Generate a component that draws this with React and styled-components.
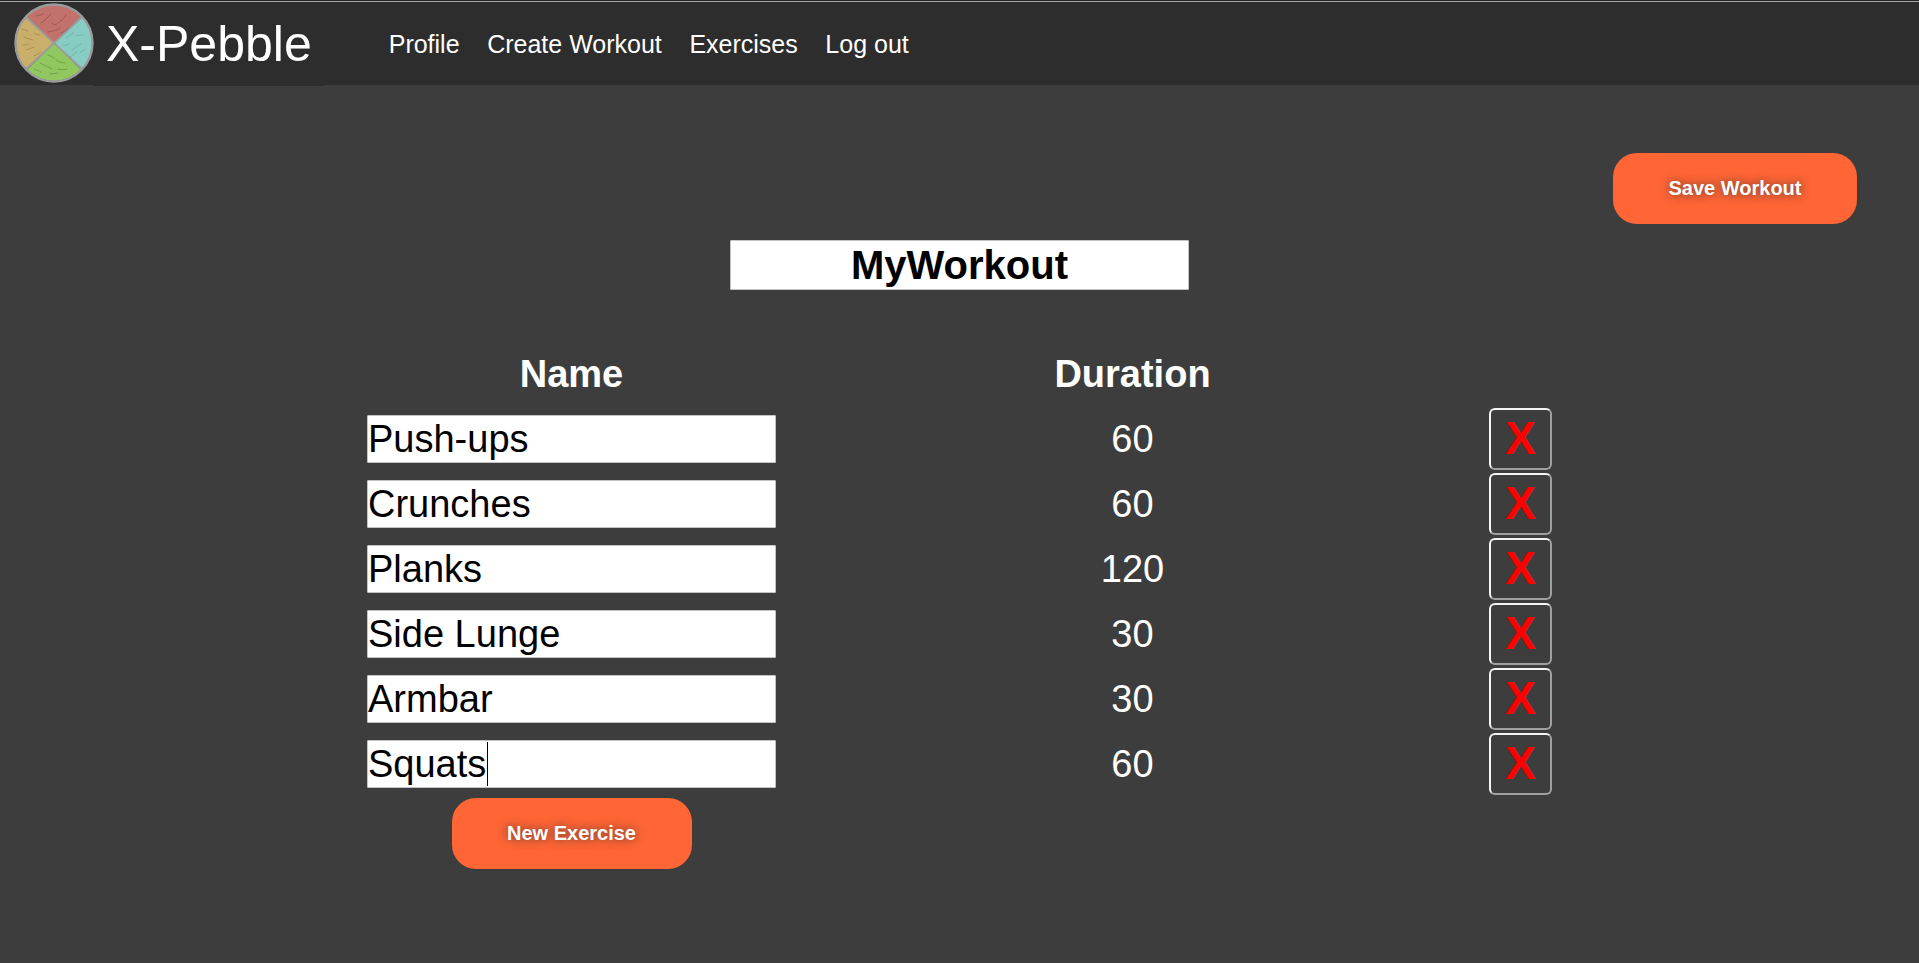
import React from 'react';
import styled, { createGlobalStyle } from 'styled-components';

const exercises = [
  { name: 'Push-ups', duration: 60 },
  { name: 'Crunches', duration: 60 },
  { name: 'Planks', duration: 120 },
  { name: 'Side Lunge', duration: 30 },
  { name: 'Armbar', duration: 30 },
  { name: 'Squats', duration: 60, focused: true },
];

const links = ['Profile', 'Create Workout', 'Exercises', 'Log out'];

const GlobalStyle = createGlobalStyle`
  html, body {
    margin: 0;
    padding: 0;
    height: 100%;
    background: #3d3d3d;
    font-family: "Liberation Sans", Arial, sans-serif;
  }
`;

const Page = styled.div`
  min-height: 963px;
  background: #3d3d3d;
  color: #fff;
`;

const NavBar = styled.header`
  position: relative;
  box-sizing: border-box;
  height: 85px;
  display: flex;
  align-items: center;
  background: #2d2d2d;
  border-top: 1px solid #232323;
  box-shadow: inset 0 1px 0 #a9a9a9;
  padding: 2px 0 0 14px;

  &::after {
    content: '';
    position: absolute;
    left: 94px;
    top: 100%;
    width: 230px;
    height: 1px;
    background: #2d2d2d;
  }
`;

const Brand = styled.a`
  display: flex;
  align-items: center;
  gap: 12px;
  font-size: 50px;
  color: #fff;
`;

const LogoMark = styled.svg`
  display: block;
  margin-top: -3px;
`;

const NavLinks = styled.nav`
  display: flex;
  gap: 27.6px;
  margin-left: 77px;
`;

const NavLink = styled.a`
  font-size: 25px;
  color: #fff;
`;

const Main = styled.main`
  padding-top: 68px;
`;

const SaveRow = styled.div`
  display: flex;
  justify-content: flex-end;
  padding-right: 62px;
`;

const OrangeButton = styled.button`
  width: ${(p) => p.$width}px;
  height: 71px;
  border: none;
  border-radius: 24px;
  background: #ff6535;
  color: #fff;
  font-family: inherit;
  font-size: 20px;
  font-weight: 700;
  text-shadow: 0 0 10px rgba(60, 50, 50, 0.85);
  padding: 0;
`;

const TitleRow = styled.div`
  display: flex;
  justify-content: center;
  margin-top: 16px;
`;

const TitleInput = styled.input`
  box-sizing: border-box;
  width: 459px;
  height: 50px;
  border: 1px solid #c4c4c4;
  border-radius: 1px;
  padding: 0;
  background: #fff;
  color: #000;
  font-family: inherit;
  font-size: 40px;
  font-weight: 700;
  text-align: center;
`;

const Table = styled.section`
  display: grid;
  grid-template-columns: 409px 299px 63px;
  column-gap: 207px;
  row-gap: 3px;
  grid-auto-rows: 62px;
  padding-left: 367px;
  margin-top: 53px;
  align-items: center;
  justify-items: center;
`;

const HeaderCell = styled.h2`
  margin: 0;
  font-size: 38px;
  font-weight: 700;
  color: #fff;
`;

const InputWrap = styled.div`
  position: relative;
  width: 100%;
`;

const NameInput = styled.input`
  display: block;
  box-sizing: border-box;
  width: 100%;
  height: 48px;
  border: 1px solid #c4c4c4;
  border-radius: 1px;
  padding: 1px 0 0;
  background: #fff;
  color: #000;
  font-family: inherit;
  font-size: 38px;
`;

const Caret = styled.span`
  position: absolute;
  left: 120px;
  top: 2px;
  width: 1px;
  height: 44px;
  background: #000;
`;

const Duration = styled.span`
  font-size: 38px;
  color: #fff;
`;

const RemoveButton = styled.button`
  box-sizing: border-box;
  width: 63px;
  height: 62px;
  border-width: 2px;
  border-style: solid;
  border-color: #f4f4f4 #a0a0a0 #a0a0a0 #f4f4f4;
  border-radius: 6px;
  background: transparent;
  color: #ff0000;
  font-family: inherit;
  font-size: 46px;
  font-weight: 700;
  line-height: 1;
  padding: 0 0 2px;
`;

const NewExerciseRow = styled.div`
  display: flex;
  justify-content: center;
  width: 409px;
  margin: 3px 0 0 367px;
`;

const Logo = () => (
  <LogoMark width="80" height="80" viewBox="0 0 80 80" aria-hidden="true">
    <defs>
      <clipPath id="disc">
        <circle cx="40" cy="40" r="38" />
      </clipPath>
    </defs>
    <g clipPath="url(#disc)">
      <polygon points="40,40 0,0 80,0" fill="#c2726c" />
      <polygon points="40,40 80,0 80,80" fill="#88cdc3" />
      <polygon points="40,40 80,80 0,80" fill="#91c75f" />
      <polygon points="40,40 0,80 0,0" fill="#cab06b" />
      <g fill="none" strokeWidth="0.7" strokeLinecap="round" opacity="0.6">
        <path d="M27 20c3-2 7-6 10-9M44 20c3-2 6-4 8-8M34 29c4-1 9-1 12-4M22 13c3 0 5-1 7-2M47 30c3-1 5-2 7-5M38 20c1 2 3 2 5 1" stroke="#6d3530" />
        <path d="M52 35c3-2 6-3 8-6M58 47c3-2 6-5 9-6M49 42c3 1 5 0 7-2M62 32c2 1 5 0 8 0M56 54c2-1 5-3 7-6M66 50c1-1 3-3 5-4" stroke="#4f8f86" />
        <path d="M26 60c4 2 8 4 12 6M42 57c3 2 6 3 9 3M36 71c3 0 6-1 8-1M20 66c3 1 5 2 7 3M44 66c3 1 6 1 9 0M34 52c2 1 4 1 6 3" stroke="#3f6d22" />
        <path d="M10 34c3 2 6 2 9 3M12 47c3-1 5-2 8-3M20 53c2-1 4-2 7-4M8 26c2 1 4 1 6 2M20 30c2 1 4 2 6 2M9 42c2 0 4 0 6-1" stroke="#7b6529" />
      </g>
      <path d="M12 14L68 66M68 14L12 66" stroke="#9b9b9b" strokeWidth="1.8" />
    </g>
    <circle cx="40" cy="40" r="38.5" fill="none" stroke="#9b9b9b" strokeWidth="2.4" />
  </LogoMark>
);

const App = () => (
  <Page>
    <GlobalStyle />
    <NavBar>
      <Brand>
        <Logo />
        X-Pebble
      </Brand>
      <NavLinks>
        {links.map((link) => (
          <NavLink key={link}>{link}</NavLink>
        ))}
      </NavLinks>
    </NavBar>
    <Main>
      <SaveRow>
        <OrangeButton $width={244}>Save Workout</OrangeButton>
      </SaveRow>
      <TitleRow>
        <TitleInput defaultValue="MyWorkout" />
      </TitleRow>
      <Table>
        <HeaderCell>Name</HeaderCell>
        <HeaderCell>Duration</HeaderCell>
        <span />
        {exercises.map((exercise) => (
          <React.Fragment key={exercise.name}>
            <InputWrap>
              <NameInput defaultValue={exercise.name} />
              {exercise.focused && <Caret />}
            </InputWrap>
            <Duration>{exercise.duration}</Duration>
            <RemoveButton>X</RemoveButton>
          </React.Fragment>
        ))}
      </Table>
      <NewExerciseRow>
        <OrangeButton $width={240}>New Exercise</OrangeButton>
      </NewExerciseRow>
    </Main>
  </Page>
);

export default App;
